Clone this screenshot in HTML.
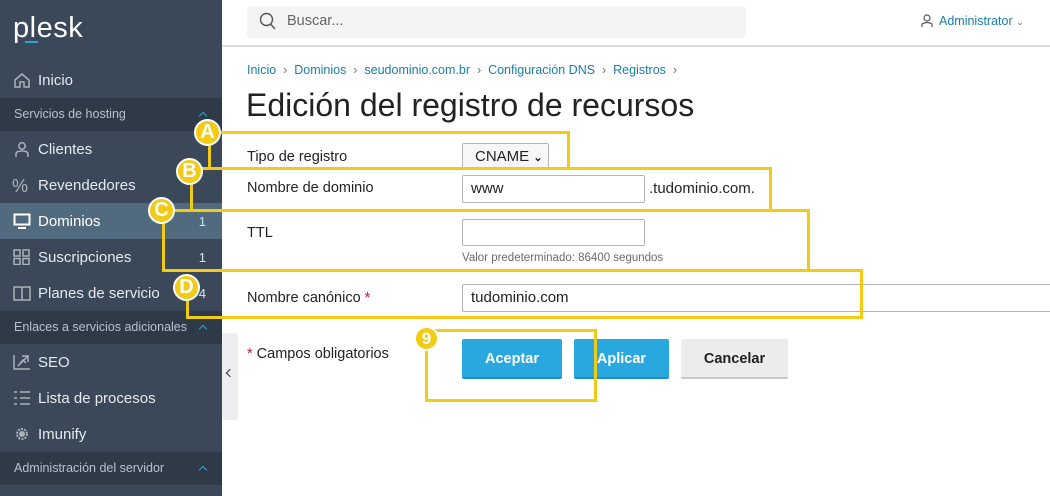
<!DOCTYPE html>
<html><head><meta charset="utf-8"><style>
*{margin:0;padding:0;box-sizing:border-box}
body{width:1050px;height:496px;overflow:hidden;background:#fff;font-family:"Liberation Sans",sans-serif;position:relative}
.a{position:absolute}
#sb{left:0;top:0;width:222px;height:496px;background:#3b4859}
.it{position:absolute;left:0;width:222px;height:36px;color:#e6eaee;font-size:15px;line-height:38px;padding-left:38px}
.ic{position:absolute;left:13px;top:10px;width:18px;height:16px}
.hd{position:absolute;left:0;width:222px;height:33px;background:#2e3a47;color:#b9c2cb;font-size:12.5px;line-height:33px;padding-left:14px}
.hd:after{content:"";position:absolute;right:16px;top:15px;width:5px;height:5px;border-left:1.5px solid #28a9de;border-top:1.5px solid #28a9de;transform:rotate(45deg)}
.cnt{position:absolute;right:16px;font-size:13px;color:#dfe6ec}
.y{position:absolute;background:#f2cb16}
.c{position:absolute;width:27px;height:27px;border-radius:50%;background:#f2cb16;border:2px solid #fff;color:#fff;font-weight:bold;font-size:20px;text-align:center;line-height:23px}
.lbl{position:absolute;left:247px;font-size:14.5px;color:#222}
.inp{position:absolute;border:1px solid #b5b5b5;border-radius:2px;background:#fff;font-size:15px;color:#222;padding-left:8px;line-height:26px}
.btn{position:absolute;top:339px;height:40px;border-radius:2px;font-size:14.5px;font-weight:bold;text-align:center;line-height:40px}
.bc{color:#1b7ea6;font-size:12.5px}
</style></head><body>
<div id="sb" class="a">
 <div class="a" style="left:13px;top:12px;color:#fff;font-size:29px;letter-spacing:0.5px">plesk</div>
 <div class="a" style="left:25px;top:41px;width:13px;height:2px;background:#28a9de"></div>
 <div class="it" style="top:62px"><svg class="ic" viewBox="0 0 18 16"><path d="M2 8 L9 2 L16 8 V15 H11 V10 H7 V15 H2Z" fill="none" stroke="#aab3bc" stroke-width="1.5"/></svg>Inicio</div>
 <div class="hd" style="top:98px">Servicios de hosting</div>
 <div class="it" style="top:131px"><svg class="ic" viewBox="0 0 18 16"><circle cx="9" cy="5" r="3.2" fill="none" stroke="#aab3bc" stroke-width="1.5"/><path d="M3 16 V13 Q3 10 9 10 Q15 10 15 13 V16" fill="none" stroke="#aab3bc" stroke-width="1.5"/></svg>Clientes</div>
 <div class="it" style="top:167px"><span class="a" style="left:12px;top:0;color:#aab3bc;font-size:18px">%</span>Revendedores</div>
 <div class="it" style="top:203px;background:#526a7d;color:#fff"><svg class="ic" viewBox="0 0 18 16"><rect x="1.5" y="1.5" width="15" height="10" fill="none" stroke="#fff" stroke-width="2"/><path d="M5 15 H13" stroke="#fff" stroke-width="2"/></svg>Dominios<span class="cnt" style="color:#bfe6f6">1</span></div>
 <div class="it" style="top:239px"><svg class="ic" viewBox="0 0 18 16"><g fill="none" stroke="#aab3bc" stroke-width="1.5"><rect x="1" y="1" width="6" height="6"/><rect x="10" y="1" width="6" height="6"/><rect x="1" y="9.5" width="6" height="6"/><rect x="10" y="9.5" width="6" height="6"/></g></svg>Suscripciones<span class="cnt">1</span></div>
 <div class="it" style="top:275px"><svg class="ic" viewBox="0 0 18 16"><path d="M1 2 H8 L9 3 L10 2 H17 V15 H1Z M9 3 V15" fill="none" stroke="#aab3bc" stroke-width="1.5"/></svg>Planes de servicio<span class="cnt">4</span></div>
 <div class="hd" style="top:311px">Enlaces a servicios adicionales</div>
 <div class="it" style="top:344px"><svg class="ic" viewBox="0 0 18 16"><path d="M1 1 V15 H17 M5 12 L10 6 L13 9 M9 2 H15 V8 M15 2 L7 10" fill="none" stroke="#aab3bc" stroke-width="1.5"/></svg>SEO</div>
 <div class="it" style="top:380px"><svg class="ic" viewBox="0 0 18 16"><path d="M7 2 H17 M7 8 H17 M7 14 H17 M1 2 H4 M1 8 H4 M1 14 H4" stroke="#aab3bc" stroke-width="1.5"/></svg>Lista de procesos</div>
 <div class="it" style="top:416px"><svg class="ic" viewBox="0 0 18 16"><circle cx="9" cy="8" r="5" fill="none" stroke="#aab3bc" stroke-width="2" stroke-dasharray="2 1.2"/><circle cx="9" cy="8" r="3" fill="#aab3bc"/></svg>Imunify</div>
 <div class="hd" style="top:452px">Administración del servidor</div>
</div>
<div class="a" style="left:222px;top:333px;width:16px;height:87px;background:#eceeef;border-radius:0 3px 3px 0"></div>
<div class="a" style="left:227px;top:370px;width:6px;height:6px;border-left:1.3px solid #333;border-bottom:1.3px solid #333;transform:rotate(45deg)"></div>

<div class="a" style="left:222px;top:45px;width:828px;height:2px;background:#dcdcdc"></div>
<div class="a" style="left:247px;top:6px;width:499px;height:32px;background:#f4f4f4;border-radius:4px"></div>
<svg class="a" style="left:259px;top:12px" width="18" height="20" viewBox="0 0 18 20"><circle cx="7.5" cy="7.5" r="6" fill="none" stroke="#555" stroke-width="1.4"/><path d="M11.5 12 L16 17" stroke="#555" stroke-width="1.5"/></svg>
<div class="a" style="left:287px;top:13px;font-size:14.5px;color:#666">Buscar...</div>
<svg class="a" style="left:921px;top:14px" width="12" height="14" viewBox="0 0 12 14"><circle cx="6" cy="4" r="3" fill="none" stroke="#555" stroke-width="1.2"/><path d="M1 13 V10 Q6 7 11 10 V13" fill="none" stroke="#555" stroke-width="1.2"/></svg>
<div class="a" style="left:939px;top:14px;font-size:12.5px;color:#1b7ea6">Administrator <span style="color:#666;font-size:9px">&#8964;</span></div>

<div class="a bc" style="left:247px;top:63px">Inicio <span style="color:#777">&nbsp;›&nbsp;</span> Dominios <span style="color:#777">&nbsp;›&nbsp;</span> seudominio.com.br <span style="color:#777">&nbsp;›&nbsp;</span> Configuración DNS <span style="color:#777">&nbsp;›&nbsp;</span> Registros <span style="color:#777">&nbsp;›</span></div>
<div class="a" style="left:246px;top:87px;font-size:32px;color:#222">Edición del registro de recursos</div>

<div class="lbl" style="top:149px">Tipo de registro</div>
<div class="lbl" style="top:180px">Nombre de dominio</div>
<div class="lbl" style="top:225px">TTL</div>
<div class="lbl" style="top:290px">Nombre canónico <span style="color:#c0135a">*</span></div>

<div class="inp" style="left:462px;top:143px;width:87px;height:27px;background:#f7f7f7;line-height:25px;padding-left:12px">CNAME <span style="font-size:11px;font-weight:bold">&#8964;</span></div>
<div class="inp" style="left:462px;top:175px;width:183px;height:28px">www</div>
<div class="a" style="left:649px;top:180px;font-size:15px;color:#222">.tudominio.com.</div>
<div class="inp" style="left:462px;top:219px;width:183px;height:27px"></div>
<div class="a" style="left:462px;top:252px;font-size:11.5px;color:#6a6a6a">Valor predeterminado: 86400 segundos</div>
<div class="inp" style="left:462px;top:284px;width:600px;height:28px">tudominio.com</div>

<div class="a" style="left:247px;top:346px;font-size:14.5px;color:#222"><span style="color:#c0135a">*</span> Campos obligatorios</div>
<div class="btn" style="left:462px;width:100px;background:#28a8de;color:#fff;border-bottom:2px solid #1f8fc0">Aceptar</div>
<div class="btn" style="left:574px;width:95px;background:#28a8de;color:#fff;border-bottom:2px solid #1f8fc0">Aplicar</div>
<div class="btn" style="left:681px;width:107px;background:#ececec;color:#222;border-bottom:2px solid #c9c9c9">Cancelar</div>

<div class="y" style="left:208px;top:131px;width:362px;height:3px"></div>
<div class="y" style="left:567px;top:131px;width:3px;height:39px"></div>
<div class="y" style="left:208px;top:131px;width:3px;height:39px"></div>
<div class="y" style="left:190px;top:167px;width:582px;height:3px"></div>
<div class="y" style="left:769px;top:167px;width:3px;height:44px"></div>
<div class="y" style="left:190px;top:167px;width:3px;height:44px"></div>
<div class="y" style="left:162px;top:209px;width:648px;height:3px"></div>
<div class="y" style="left:807px;top:209px;width:3px;height:62px"></div>
<div class="y" style="left:162px;top:209px;width:3px;height:62px"></div>
<div class="y" style="left:162px;top:269px;width:701px;height:3px"></div>
<div class="y" style="left:860px;top:269px;width:3px;height:49px"></div>
<div class="y" style="left:186px;top:288px;width:3px;height:30px"></div>
<div class="y" style="left:186px;top:316px;width:677px;height:3px"></div>
<div class="a" style="left:425px;top:329px;width:172px;height:73px;border:3px solid #f2cb16"></div>
<div class="c" style="left:194px;top:119px">A</div>
<div class="c" style="left:176px;top:158px">B</div>
<div class="c" style="left:148px;top:197px">C</div>
<div class="c" style="left:173px;top:274px">D</div>
<div class="c" style="left:414px;top:326px;width:25px;height:25px;font-size:17px;line-height:21px">9</div>
</body></html>
